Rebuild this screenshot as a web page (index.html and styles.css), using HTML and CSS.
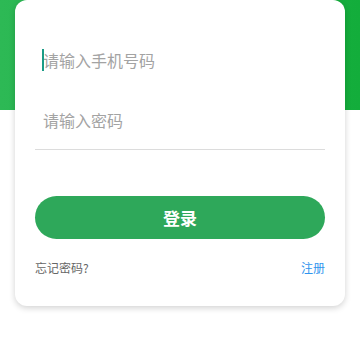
FILE: index.html
```html
<!DOCTYPE html>
<html lang="zh-CN">
<head>
    <meta charset="UTF-8">
    <meta name="viewport" content="width=device-width, initial-scale=1.0">
    <title>登录</title>
    <link rel="stylesheet" href="styles.css">
</head>
<body>
<div class="page">
    <div class="login-card">
        <form class="login-form">
            <div class="field-wrap">
                <input type="tel" class="field" placeholder="请输入手机号码">
                <span class="caret"></span>
            </div>
            <input type="password" class="field field-pwd" placeholder="请输入密码">
            <button type="button" class="submit">登录</button>
        </form>
        <div class="links">
            <a href="#" class="forgot">忘记密码?</a>
            <a href="#" class="register">注册</a>
        </div>
    </div>
</div>
</body>
</html>
```

FILE: styles.css
```css
html, body {
    margin: 0;
    padding: 0;
    background: #fff;
}
body {
    font-family: "Noto Sans CJK SC", "Noto Sans", sans-serif;
}
.page {
    height: 360px;
    background: linear-gradient(to right, #2db955, #13ad3b) no-repeat;
    background-size: 100% 110px;
}
.login-card {
    margin: 0 15px;
    background: #fff;
    border-radius: 12px;
    box-shadow: 0 2px 6px rgba(0, 0, 0, 0.18);
    padding: 30px 20px 30px;
}
.login-form {
    display: flex;
    flex-direction: column;
}
.field-wrap {
    position: relative;
    display: flex;
    flex-direction: column;
}
.field {
    height: 60px;
    border: none;
    border-bottom: 1px solid #fff;
    padding: 0 8px;
    font-family: inherit;
    font-size: 16px;
    color: #333;
    outline: none;
    caret-color: #1a9c86;
    box-sizing: border-box;
}
.field::placeholder {
    color: #a3a3a3;
}
.field-pwd {
    border-bottom-color: #dcdcdc;
}
/* curseur du champ actif */
.caret {
    position: absolute;
    left: 7px;
    top: 19px;
    width: 2px;
    height: 22px;
    background: #1a9c86;
}
.submit {
    margin-top: 46px;
    height: 43px;
    border: none;
    border-radius: 22px;
    background: #2ea85a;
    color: #fff;
    font-family: inherit;
    font-size: 17px;
    font-weight: bold;
}
.links {
    display: flex;
    justify-content: space-between;
    margin-top: 20px;
    font-size: 12px;
}
.links a {
    text-decoration: none;
}
.forgot {
    color: #666;
}
.register {
    color: #2f95ee;
}
```
